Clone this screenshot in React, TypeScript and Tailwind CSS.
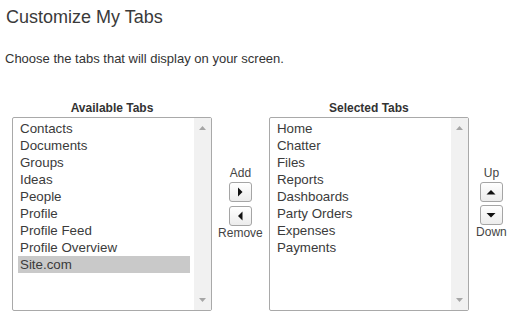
const available = ['Contacts', 'Documents', 'Groups', 'Ideas', 'People', 'Profile', 'Profile Feed', 'Profile Overview', 'Site.com'];
const selected = ['Home', 'Chatter', 'Files', 'Reports', 'Dashboards', 'Party Orders', 'Expenses', 'Payments'];

function Tri({ dir }: { dir: 'up' | 'down' | 'left' | 'right' }) {
  const pts = {
    up: '0.5,7.5 5,3 9.5,7.5',
    down: '0.5,3 5,7.5 9.5,3',
    left: '7.5,0.5 3,5 7.5,9.5',
    right: '3,0.5 7.5,5 3,9.5',
  }[dir];
  return (
    <svg width="10" height="10" viewBox="0 0 10 10">
      <polygon points={pts} fill="#111" />
    </svg>
  );
}

function ArrowBtn({ dir }: { dir: 'up' | 'down' | 'left' | 'right' }) {
  return (
    <button className="w-[23px] h-[20px] flex items-center justify-center rounded-[3px] border border-[#a5a5a5] bg-gradient-to-b from-white to-[#ececec]">
      <Tri dir={dir} />
    </button>
  );
}

function ListBox({ items, active }: { items: string[]; active?: string }) {
  return (
    <div className="w-[200px] h-[194px] flex border border-[#a9a9a9] rounded-[2px] bg-white">
      <ul className="flex-1 pt-[2px] pl-[5px] pr-[4px]">
        {items.map((t) => (
          <li
            key={t}
            className={`h-[17px] leading-[17px] pl-[2px] text-[13.33px] text-[#3b3b3b] ${t === active ? 'bg-[#c9c9c9]' : ''}`}
          >
            {t}
          </li>
        ))}
      </ul>
      <div className="w-[17px] bg-[#f1f1f1] flex flex-col justify-between items-center py-[8px]">
        <svg width="7" height="4" viewBox="0 0 7 4"><polygon points="0,4 3.5,0 7,4" fill="#a6a6a6" /></svg>
        <svg width="7" height="4" viewBox="0 0 7 4"><polygon points="0,0 3.5,4 7,0" fill="#a6a6a6" /></svg>
      </div>
    </div>
  );
}

function Column({ label, children }: { label: string; children: React.ReactNode }) {
  return (
    <div className="flex flex-col items-center">
      <div className="text-[12px] font-bold text-[#333] leading-[15px] mb-[1px]">{label}</div>
      {children}
    </div>
  );
}

export default function App() {
  return (
    <div className="w-[514px] h-[314px] bg-white overflow-hidden [font-family:'Liberation_Sans',Arial,sans-serif]">
      <h1 className="pl-[6px] pt-[6px] text-[18px] leading-[23px] text-[#3a3a3a]">Customize My Tabs</h1>
      <p className="pl-[5px] mt-[22px] text-[13px] leading-[15px] text-[#333]">Choose the tabs that will display on your screen.</p>
      <div className="flex mt-[35px] pl-[12px]">
        <Column label="Available Tabs">
          <ListBox items={available} active="Site.com" />
        </Column>
        <div className="w-[58px] flex flex-col items-center pt-[65px] text-[12px] text-[#444]">
          <span className="leading-[14px] mb-[2px]">Add</span>
          <ArrowBtn dir="right" />
          <div className="h-[4px]" />
          <ArrowBtn dir="left" />
          <span className="leading-[14px]">Remove</span>
        </div>
        <Column label="Selected Tabs">
          <ListBox items={selected} />
        </Column>
        <div className="w-[46px] flex flex-col items-center pt-[65px] text-[12px] text-[#444]">
          <span className="leading-[14px] mb-[2px]">Up</span>
          <ArrowBtn dir="up" />
          <div className="h-[3px]" />
          <ArrowBtn dir="down" />
          <span className="leading-[14px]">Down</span>
        </div>
      </div>
    </div>
  );
}
